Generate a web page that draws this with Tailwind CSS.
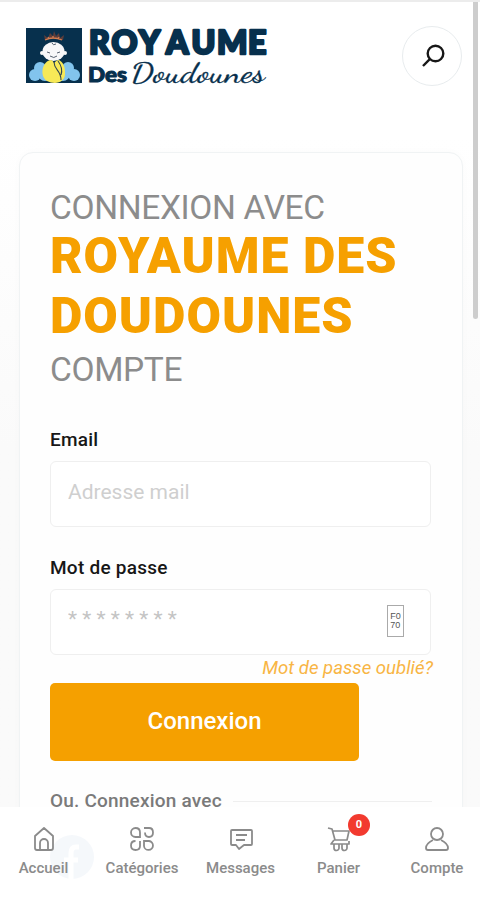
<!DOCTYPE html>
<html lang="fr">
  <head>
    <meta charset="UTF-8" />
    <meta name="viewport" content="width=device-width, initial-scale=1.0" />
    <title>Connexion - Royaume Des Doudounes</title>
    <script src="https://cdn.jsdelivr.net/npm/@tailwindcss/browser@4"></script>
  </head>
  <body class="h-[900px] overflow-hidden bg-white font-['Roboto',sans-serif]">
    <div class="relative h-[900px] w-[480px] overflow-hidden border-t-2 border-[#ececec] bg-linear-to-b from-white from-15% to-[#fafafa] to-50%">
      <header class="flex h-[150px] items-start justify-between pt-6 pr-[18px] pl-[25px]">
        <!-- Logo -->
        <svg class="mt-0.5 h-[62px] w-[245px] overflow-visible" viewBox="0 0 245 62">
          <rect x="1" y="0" width="56" height="55" fill="#07304d" />
          <g fill="#82c4ed">
            <circle cx="10" cy="47" r="6" />
            <circle cx="15" cy="40" r="6" />
            <circle cx="20" cy="46" r="7" />
            <circle cx="49" cy="47" r="6" />
            <circle cx="43" cy="40" r="6" />
            <circle cx="38" cy="46" r="7" />
          </g>
          <path d="M20 12l-1-5 4 3 2-5 3 3 1-5 2 5 3-3 1 5 4-3-1 5q-9-3-18 0z" fill="#5b3d3b" />
          <path d="M20 12q8-4 17 0M23 9l1 2m4-3v2m6-1l-1 2" fill="none" stroke="#d37d50" stroke-width="1.300" />
          <circle cx="17" cy="25" r="2" fill="#f7f7f7" />
          <circle cx="40" cy="25" r="2" fill="#f7f7f7" />
          <ellipse cx="28.500" cy="23.500" rx="11" ry="9.500" fill="#f7f7f9" />
          <path d="M22 24l3 1m7 0l3-1M25 28q4 3 7 0M27 15q1 3 4 1" fill="none" stroke="#566170" stroke-width="1" />
          <path d="M25 32c-9 3-10 17-3 21 8 4 19 2 18-9 0-5-2-10-6-12-2 0-3 1-5 3-1-2-2-3-4-3z" fill="#f7e957" />
          <path d="M29 34c0 8 7 8 7 18M33 33c3 4 5 8 3 14" fill="none" stroke="#314651" stroke-width="1.100" />
          <text x="64 86.500 114 141 166.500 192 223" y="25.500" fill="#07304d" stroke="#07304d" stroke-width="2.600" stroke-linejoin="round" class="font-['Lato',sans-serif] text-[32px] font-black">ROYAUME</text>
          <text x="63" y="54" textLength="39" lengthAdjust="spacingAndGlyphs" fill="#07304d" stroke="#07304d" stroke-width="1" class="font-['Lato',sans-serif] text-[20px] font-black">Des</text>
          <text x="106" y="54" textLength="134" lengthAdjust="spacingAndGlyphs" fill="#07304d" stroke="#07304d" stroke-width=".3" class="font-['Dancing_Script','Pacifico','Liberation_Serif',cursive] text-[29px]">Doudounes</text>
        </svg>
        <button class="flex size-[60px] items-center justify-center rounded-full border-[1.500px] border-[#e8ecee] bg-white" aria-label="Rechercher">
          <svg class="mb-0.5 ml-0.5 size-7" viewBox="0 0 28 28" fill="none" stroke="#171717" stroke-width="2.400">
            <circle cx="16.500" cy="12.500" r="7.800" />
            <path d="M10.800 18.200L4 25" />
          </svg>
        </button>
      </header>

      <main class="ml-[19px] h-[800px] w-[444px] rounded-[14px] border border-[#f0f3f4] bg-[#fefefe] px-[30px] pt-9 shadow-[0_0_8px_rgba(0,0,0,0.02)]">
        <h1 class="text-[33.500px] font-normal tracking-[-0.350px] whitespace-nowrap text-[#8c8c8c] uppercase">
          <span class="block h-[37px] leading-[38px]">Connexion avec</span>
          <span class="block text-[50px] leading-[60px] font-black tracking-[1px] text-[#f6a000]">Royaume des<br />Doudounes</span>
          <span class="block h-12 leading-12">Compte</span>
        </h1>

        <form class="pt-[29px]">
          <label class="block h-[38px] text-[19px] leading-[33px] font-medium tracking-[0.200px] text-[#171717]" for="email">Email</label>
          <input id="email" type="email" placeholder="Adresse mail" class="block h-[66px] w-[381px] rounded-md border-[1.500px] border-[#efefef] bg-white px-[17px] pb-1 text-[21px] placeholder:text-[#cfcfcf]" />

          <label class="mt-6 block h-[38px] text-[19px] leading-[33px] font-medium tracking-[0.250px] text-[#171717]" for="password">Mot de passe</label>
          <div class="flex h-[66px] w-[381px] items-center justify-between rounded-md border-[1.500px] border-[#efefef] bg-white pr-[26px] pl-[17px]">
            <input id="password" type="password" placeholder="* * * * * * * *" class="mb-1 w-[200px] text-[21px] placeholder:text-[#c4c4c4]" />
            <span class="mb-0.5 grid h-8 w-[17px] place-content-center border border-[#aaa] font-['Liberation_Sans',sans-serif] text-[9px] leading-[9px] text-[#555]"><span>F0</span><span>70</span></span>
          </div>
          <a class="-mr-px block h-7 text-right text-[18.600px] leading-[26px] text-[#f8b544] italic">Mot de passe oublié?</a>
          <button type="button" class="block h-[78px] w-[309px] rounded-[5px] bg-[#f5a000] pb-0.5 text-[24px] font-medium text-white">Connexion</button>

          <div class="mt-[26px] flex h-7 items-center gap-[11px]">
            <span class="text-[19px] font-medium tracking-[0.200px] text-[#7a7a7a]">Ou. Connexion avec</span>
            <span class="h-px grow bg-[#efefef]"></span>
          </div>
          <div class="mt-5 flex size-11 items-end justify-center rounded-full bg-[#3b6fb0]">
            <svg class="h-9 w-5" viewBox="0 0 20 36" fill="none" stroke="white" stroke-width="5"><path d="M17 4h-3q-5 0-5 6v26M2 17h14" /></svg>
          </div>
        </form>
      </main>

      <!-- Scroll position -->
      <div class="absolute top-0 right-0.5 h-[317px] w-[5px] rounded-b-full bg-[#cdcdcd]"></div>

      <!-- Bottom navigation -->
      <nav class="absolute bottom-0 left-0 flex h-[93px] w-full bg-white/95 text-[15px] font-medium text-[#8b8b8b]">
        <a class="flex w-[87px] shrink-0 flex-col items-center pt-[19px]">
          <svg class="size-[26px]" viewBox="0 0 26 26" fill="none" stroke="currentColor" stroke-width="1.800" stroke-linejoin="round"><path d="M4 10l9-8 9 8v12q0 2-2 2H6q-2 0-2-2zM9 24v-7a4 4 0 0 1 8 0v7" /></svg>
          <span class="mt-1.5 leading-5">Accueil</span>
        </a>
        <a class="flex w-[110px] shrink-0 flex-col items-center pt-[19px]">
          <svg class="size-[26px]" viewBox="0 0 26 26" fill="none" stroke="currentColor" stroke-width="1.800"><path d="M11 11H6.500a4.500 4.500 0 0 1 0-9q4.500 0 4.500 4.500zM15 2h5q4 0 4 4.500t-4 4.500t-4-4.500M11 15v5q0 4-4.500 4T2 19.500q0-4.500 4.500-4.500M15 15h5a4.500 4.500 0 1 1-5 5z" /></svg>
          <span class="mt-1.5 leading-5">Catégories</span>
        </a>
        <a class="flex w-[87px] shrink-0 flex-col items-center pt-[19px]">
          <svg class="size-[26px]" viewBox="0 0 26 26" fill="none" stroke="currentColor" stroke-width="1.800" stroke-linejoin="round"><path d="M4 4h19q1 0 1 1v13q0 1-1 1h-7l-5 4-3-4H4q-1 0-1-1V5q0-1 1-1zM8 9h11M8 14h9" /></svg>
          <span class="mt-1.5 leading-5">Messages</span>
        </a>
        <a class="relative flex w-[109px] shrink-0 flex-col items-center pt-[19px]">
          <svg class="size-[26px]" viewBox="0 0 26 26" fill="none" stroke="currentColor" stroke-width="1.700" stroke-linejoin="round"><path d="M2 2l4 1 3 11h12l2-9H7M8 14l-3 4h18v-3M8 18v4a2 2 0 0 0 5 0v-4M16 18v4a2 2 0 0 0 5 0v-4" /></svg>
          <span class="mt-1.5 leading-5">Panier</span>
          <span class="absolute top-[7px] left-[64px] flex size-[22px] items-center justify-center rounded-full bg-[#f23a2f] text-[11px] font-bold text-white">0</span>
        </a>
        <a class="flex w-[88px] shrink-0 flex-col items-center pt-[19px]">
          <svg class="size-[26px]" viewBox="0 0 26 26" fill="none" stroke="currentColor" stroke-width="1.800" stroke-linejoin="round"><circle cx="13" cy="8" r="6" /><path d="M9 14c-4 2-7 4-7 8 0 1 1 2 2 2h18c1 0 2-1 2-2 0-4-3-6-7-8" /></svg>
          <span class="mt-1.5 leading-5">Compte</span>
        </a>
      </nav>
    </div>
  </body>
</html>
